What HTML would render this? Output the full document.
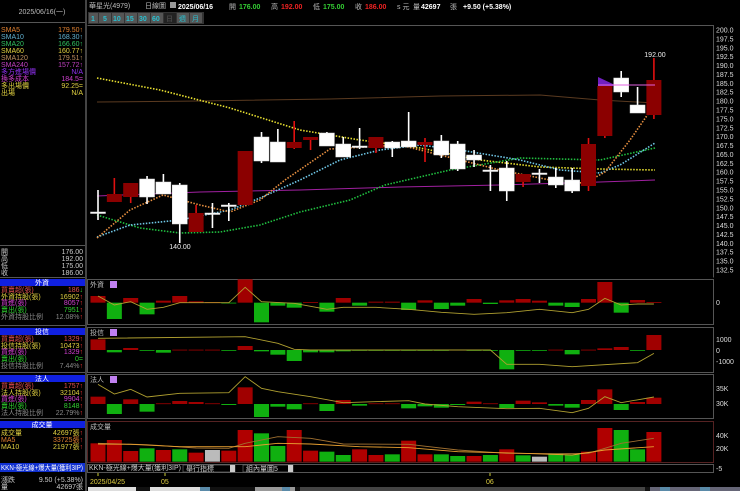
<!DOCTYPE html>
<html><head><meta charset="utf-8">
<style>
html,body{margin:0;padding:0;background:#000;width:740px;height:491px;overflow:hidden}
svg{display:block}
text{font-family:"Liberation Sans","Noto Sans CJK TC",sans-serif;font-size:7px}
</style></head><body>
<svg id="s" width="740" height="491" viewBox="0 0 740 491" xmlns="http://www.w3.org/2000/svg">
<defs><clipPath id="lc"><rect x="0" y="0" width="85" height="491"/></clipPath></defs>
<rect width="740" height="491" fill="#000"/>
<rect x="85" y="0" width="2" height="491" fill="#444"/>
<rect x="0" y="22" width="85" height="1" fill="#555"/>
<text x="42" y="14" fill="#bbb" text-anchor="middle" font-size="6.5">2025/06/16(一)</text>
<g font-size="6.5">
<text x="1" y="32" fill="#e08030">SMA5</text><text x="83" y="32" fill="#e08030" text-anchor="end">179.50↑</text>
<text x="1" y="39" fill="#60b0d0">SMA10</text><text x="83" y="39" fill="#60b0d0" text-anchor="end">168.30↑</text>
<text x="1" y="46" fill="#30c060">SMA20</text><text x="83" y="46" fill="#30c060" text-anchor="end">166.60↑</text>
<text x="1" y="53" fill="#e0d040">SMA60</text><text x="83" y="53" fill="#e0d040" text-anchor="end">160.77↑</text>
<text x="1" y="60" fill="#c09060">SMA120</text><text x="83" y="60" fill="#c09060" text-anchor="end">179.51↑</text>
<text x="1" y="67" fill="#c040c0">SMA240</text><text x="83" y="67" fill="#c040c0" text-anchor="end">157.72↑</text>
<text x="1" y="74" fill="#9030f0">多方進場價</text><text x="83" y="74" fill="#9030f0" text-anchor="end">N/A</text>
<text x="1" y="81" fill="#d040d0">換多成本</text><text x="83" y="81" fill="#d040d0" text-anchor="end">184.5=</text>
<text x="1" y="88" fill="#e0d040">多出場價</text><text x="83" y="88" fill="#e0d040" text-anchor="end">92.25=</text>
<text x="1" y="95" fill="#e0d040">出場</text><text x="83" y="95" fill="#e0d040" text-anchor="end">N/A</text>
</g>
<rect x="0" y="245" width="85" height="1" fill="#555"/>
<g font-size="6.5" fill="#ccc">
<text x="1" y="254">開</text><text x="83" y="254" text-anchor="end">176.00</text>
<text x="1" y="261">高</text><text x="83" y="261" text-anchor="end">192.00</text>
<text x="1" y="268">低</text><text x="83" y="268" text-anchor="end">175.00</text>
<text x="1" y="275">收</text><text x="83" y="275" text-anchor="end">186.00</text>
</g>
<rect x="0" y="277" width="85" height="1" fill="#555"/>
<rect x="0" y="279" width="85" height="7" fill="#1020e0"/>
<text x="42" y="285" fill="#fff" text-anchor="middle" font-size="6">外資</text>
<g font-size="6.5">
<text x="1" y="292" fill="#e05050">買賣超(張)</text><text x="83" y="292" fill="#e05050" text-anchor="end">186<tspan fill="#3c3">↓</tspan></text>
<text x="1" y="299" fill="#e0d040">外資持股(張)</text><text x="83" y="299" fill="#e0d040" text-anchor="end">16902<tspan fill="#e33">↑</tspan></text>
<text x="1" y="305" fill="#d040d0">買進(張)</text><text x="83" y="305" fill="#d040d0" text-anchor="end">8057<tspan fill="#e33">↑</tspan></text>
<text x="1" y="312" fill="#30d030">賣出(張)</text><text x="83" y="312" fill="#30d030" text-anchor="end">7951<tspan fill="#e33">↑</tspan></text>
<text x="1" y="319" fill="#888">外資持股比例</text><text x="83" y="319" fill="#888" text-anchor="end">12.08%<tspan fill="#e33">↑</tspan></text>
</g>
<rect x="0" y="325" width="85" height="1" fill="#555"/>
<rect x="0" y="328" width="85" height="7" fill="#1020e0"/>
<text x="42" y="334" fill="#fff" text-anchor="middle" font-size="6">投信</text>
<g font-size="6.5">
<text x="1" y="341" fill="#e05050">買賣超(張)</text><text x="83" y="341" fill="#e05050" text-anchor="end">1329<tspan fill="#e33">↑</tspan></text>
<text x="1" y="348" fill="#e0d040">投信持股(張)</text><text x="83" y="348" fill="#e0d040" text-anchor="end">10473<tspan fill="#e33">↑</tspan></text>
<text x="1" y="354" fill="#d040d0">買進(張)</text><text x="83" y="354" fill="#d040d0" text-anchor="end">1329<tspan fill="#e33">↑</tspan></text>
<text x="1" y="361" fill="#30d030">賣出(張)</text><text x="83" y="361" fill="#30d030" text-anchor="end">0=</text>
<text x="1" y="368" fill="#888">投信持股比例</text><text x="83" y="368" fill="#888" text-anchor="end">7.44%<tspan fill="#e33">↑</tspan></text>
</g>
<rect x="0" y="372" width="85" height="1" fill="#555"/>
<rect x="0" y="375" width="85" height="7" fill="#1020e0"/>
<text x="42" y="381" fill="#fff" text-anchor="middle" font-size="6">法人</text>
<g font-size="6.5">
<text x="1" y="388" fill="#e05050">買賣超(張)</text><text x="83" y="388" fill="#e05050" text-anchor="end">1757<tspan fill="#e33">↑</tspan></text>
<text x="1" y="395" fill="#e0d040">法人持股(張)</text><text x="83" y="395" fill="#e0d040" text-anchor="end">32104<tspan fill="#e33">↑</tspan></text>
<text x="1" y="401" fill="#d040d0">買進(張)</text><text x="83" y="401" fill="#d040d0" text-anchor="end">9904<tspan fill="#e33">↑</tspan></text>
<text x="1" y="408" fill="#30d030">賣出(張)</text><text x="83" y="408" fill="#30d030" text-anchor="end">8148<tspan fill="#e33">↑</tspan></text>
<text x="1" y="415" fill="#888">法人持股比例</text><text x="83" y="415" fill="#888" text-anchor="end">22.79%<tspan fill="#e33">↑</tspan></text>
</g>
<rect x="0" y="418" width="85" height="1" fill="#555"/>
<rect x="0" y="421" width="85" height="7" fill="#1020e0"/>
<text x="42" y="427" fill="#fff" text-anchor="middle" font-size="6">成交量</text>
<g font-size="6.5">
<text x="1" y="435" fill="#e0d040">成交量</text><text x="83" y="435" fill="#e0d040" text-anchor="end">42697張<tspan fill="#e33">↑</tspan></text>
<text x="1" y="442" fill="#e08030">MA5</text><text x="83" y="442" fill="#e08030" text-anchor="end">33725張<tspan fill="#e33">↑</tspan></text>
<text x="1" y="449" fill="#e0d040">MA10</text><text x="83" y="449" fill="#e0d040" text-anchor="end">21977張<tspan fill="#e33">↑</tspan></text>
</g>
<rect x="0" y="463" width="85" height="9" fill="#1030d0"/>
<g clip-path="url(#lc)"><text x="1" y="470" fill="#fff" font-size="5.6" textLength="82" lengthAdjust="spacingAndGlyphs">KKN-極光線+爆大量(獲利3IP)</text></g>
<g font-size="6.5" fill="#ccc">
<text x="1" y="482">漲跌</text><text x="83" y="482" text-anchor="end">9.50 (+5.38%)</text>
<text x="1" y="489">量</text><text x="83" y="489" text-anchor="end">42697張</text>
</g>

<g font-size="7">
<text x="89" y="8" fill="#bbb" font-size="6.5">華星光(4979)</text>
<text x="145" y="8" fill="#bbb" font-size="6.5">日線圖</text>
<rect x="170" y="2" width="6" height="6" fill="#999"/>
<text x="178" y="9" fill="#fff" font-weight="bold" font-size="8.5">2025/06/16</text>
<text x="229" y="9" fill="#bbb" font-size="6.5">開</text><text x="239" y="9" fill="#3c3" font-weight="bold" font-size="8">176.00</text>
<text x="271" y="9" fill="#bbb" font-size="6.5">高</text><text x="281" y="9" fill="#e22" font-weight="bold" font-size="8">192.00</text>
<text x="313" y="9" fill="#bbb" font-size="6.5">低</text><text x="323" y="9" fill="#3c3" font-weight="bold" font-size="8">175.00</text>
<text x="355" y="9" fill="#bbb" font-size="6.5">收</text><text x="365" y="9" fill="#e22" font-weight="bold" font-size="8">186.00</text>
<text x="397" y="9" fill="#bbb" font-size="6.5">s 元</text>
<text x="413" y="9" fill="#bbb" font-size="6.5">量</text><text x="421" y="9" fill="#fff" font-weight="bold" font-size="8">42697</text>
<text x="450" y="9" fill="#bbb" font-size="6.5">張</text>
<text x="463" y="9" fill="#fff" font-weight="bold" font-size="8">+9.50 (+5.38%)</text>
</g>
<rect x="88" y="12" width="116" height="12" fill="#333"/>
<g font-size="7" fill="#2ac0d0" font-weight="bold">
<rect x="89" y="13" width="9" height="10" fill="#555"/><text x="91" y="21">1</text>
<rect x="99" y="13" width="12" height="10" fill="#555"/><text x="103" y="21">5</text>
<rect x="112" y="13" width="12" height="10" fill="#555"/><text x="113" y="21">10</text>
<rect x="125" y="13" width="12" height="10" fill="#555"/><text x="126" y="21">15</text>
<rect x="138" y="13" width="12" height="10" fill="#555"/><text x="139" y="21">30</text>
<rect x="151" y="13" width="12" height="10" fill="#555"/><text x="152" y="21">60</text>
<rect x="164" y="13" width="12" height="10" fill="#222"/><text x="166" y="21" fill="#444">日</text>
<rect x="177" y="13" width="12" height="10" fill="#555"/><text x="179" y="21" font-weight="normal">週</text>
<rect x="190" y="13" width="12" height="10" fill="#555"/><text x="192" y="21" font-weight="normal">月</text>
</g>
<g fill="none" stroke="#555" stroke-width="1">
<path d="M87.5 25.5H713.5V277.5"/>
<rect x="87.5" y="279.5" width="626" height="45"/>
<rect x="87.5" y="327.5" width="626" height="45"/>
<rect x="87.5" y="374.5" width="626" height="44"/>
<rect x="87.5" y="421.5" width="626" height="41" stroke="#522"/>
<rect x="87.5" y="464.5" width="626" height="8"/>
</g>
<g id="dyn"></g>
<g font-size="6" fill="#bbb">
<text x="90" y="287">外資</text><rect x="110" y="281" width="7" height="7" fill="#c080f0"/>
<text x="90" y="335">投信</text><rect x="110" y="329" width="7" height="7" fill="#c080f0"/>
<text x="90" y="382">法人</text><rect x="110" y="376" width="7" height="7" fill="#c080f0"/>
<text x="90" y="429">成交量</text>
</g>
<g font-size="7.5" fill="#ddd">
<text x="716" y="305">0</text>
<text x="716" y="342">1000</text>
<text x="716" y="353">0</text>
<text x="716" y="364">-1000</text>
<text x="716" y="391">35K</text>
<text x="716" y="406">30K</text>
<text x="716" y="438">40K</text>
<text x="716" y="451">20K</text>
<text x="716" y="471">-5</text>
</g>
<text x="89" y="470" fill="#ccc" font-size="6">KKN-極光線+爆大量(獲利3IP)</text>
<rect x="183" y="465" width="52" height="7" fill="#000" stroke="#777" stroke-width="0.6"/><text x="186" y="471" fill="#ccc" font-size="6">舉行指標</text>
<rect x="230" y="465" width="5" height="7" fill="#ccc"/>
<rect x="243" y="465" width="50" height="7" fill="#000" stroke="#777" stroke-width="0.6"/><text x="246" y="471" fill="#ccc" font-size="6">組內量圖5</text>
<rect x="288" y="465" width="5" height="7" fill="#ccc"/>
<g stroke="#cc3" stroke-width="1"><path d="M98 473v3M165 473v3M490 473v3"/></g>
<text x="90" y="484" fill="#e0d040" font-size="8">2025/04/25</text>
<text x="161" y="484" fill="#e0d040" font-size="8">05</text>
<text x="486" y="484" fill="#e0d040" font-size="8">06</text>
<rect x="88" y="487" width="652" height="4" fill="#111"/>
<rect x="88" y="487" width="48" height="4" fill="#ddd"/>
<rect x="150" y="487" width="50" height="4" fill="#ddd"/>
<rect x="200" y="487" width="10" height="4" fill="#5a8aa8"/>
<rect x="255" y="487" width="40" height="4" fill="#999"/>
<rect x="282" y="487" width="8" height="4" fill="#5a8aa8"/>
<rect x="300" y="487" width="345" height="4" fill="#444"/>
<rect x="650" y="487" width="90" height="4" fill="#667"/>
<rect x="660" y="487" width="10" height="4" fill="#5a8aa8"/>
<rect x="700" y="487" width="10" height="4" fill="#5a8aa8"/>
</svg>
<script>
var NS="http://www.w3.org/2000/svg",g=document.getElementById("dyn");
function el(t,a){var e=document.createElementNS(NS,t);for(var k in a)e.setAttribute(k,a[k]);g.appendChild(e);return e;}
function cx(i){return 98+16.35*i;}
for(var k=0;k<=27;k++){var p=200-2.5*k,y=30+k*8.889;var t=el("text",{x:716,y:y+2.5,fill:"#ddd","font-size":"7.5"});t.textContent=p.toFixed(1);}
function line(pts,col,dash,w){el("polyline",{points:pts.map(function(p){return p.join(",")}).join(" "),fill:"none",stroke:col,"stroke-width":w||1.6,"stroke-dasharray":dash||"none"});}
line([[97,102],[200,101],[330,99],[440,96],[540,95],[600,100],[655,103]],"#5a3a20",null,1);
line([[97,196],[200,192],[300,190],[400,187],[500,185],[600,182],[655,180]],"#a020a0",null,1);
line([[97,78],[160,90],[230,108],[300,130],[360,140],[420,148],[480,160],[540,167],[600,169],[655,170]],"#e8e030","1.5 1.5");
line([[97,215],[140,228],[180,233],[220,232],[260,225],[300,212],[350,200],[385,185],[450,170],[520,158],[600,160],[655,148]],"#20c040","1.5 1.5");
line([[97,237],[130,225],[180,220],[230,210],[260,198],[300,180],[340,160],[380,150],[420,145],[460,150],[520,160],[560,170],[600,173],[620,165],[655,143]],"#70c8e8","1.5 1.5");
line([[97,238],[130,210],[163,195],[200,205],[230,212],[260,200],[285,180],[330,149],[365,147],[400,145],[460,160],[500,170],[560,182],[585,183],[605,172],[630,140],[655,104]],"#e89040","1.5 1.5");
var C=[["w",212,213,190,220],["r",194,202,178,202],["r",183,197,183,203],["w",179,197,176,204],["w",182,194,174,194],["w",185,224,183,243],["r",213,232,205,232],["w",213,214,203,228],["w",205,206,203,221],["r",151,205,151,205],["w",137,161,132,163],["w",142,162,129,162],["r",142,148,121,149],["r",137,140,137,150],["w",133,146,132,146],["w",144,157,137,157],["w",146,147,128,149],["r",137,148,137,153],["w",142,148,141,157],["w",141,147,112,147],["r",142,145,138,162],["w",141,155,135,158],["w",144,169,141,171],["w",155,160,150,167],["w",170,171,165,191],["w",168,191,161,201],["r",174,182,174,187],["w",173,174,169,183],["w",177,185,168,188],["w",180,191,168,193],["r",144,186,138,191],["r",86,136,86,138],["w",78,92,71,97],["w",105,113,87,113],["r",80,115,58,119]];
el("polygon",{points:"598,77 615,85 598,93",fill:"#7020c0"});
C.forEach(function(c,i){var x=cx(i),col=c[0]=="w"?"#fff":"#8b0000",wc=c[0]=="w"?"#fff":"#e01010";
el("rect",{x:x-0.8,y:c[3],width:1.6,height:c[4]-c[3],fill:wc});
el("rect",{x:x-7.5,y:c[1],width:15,height:Math.max(1.5,c[2]-c[1]),fill:col,stroke:c[0]=="w"?"#ddd":"none","stroke-width":0.5});});
el("rect",{x:598,y:84.5,width:57,height:1,fill:"#e060e0"});
var t1=el("text",{x:655,y:57,fill:"#eee","font-size":"7.5","text-anchor":"middle"});t1.textContent="192.00";
var t2=el("text",{x:180,y:249,fill:"#eee","font-size":"7.5","text-anchor":"middle"});t2.textContent="140.00";
function Y(z){return 270+z/3;}
function bars(data,zero){data.forEach(function(v,i){if(v==null)return;var y1=Y(Math.min(v,zero)),y2=Y(Math.max(v,zero));var col=v<zero?"#a00000":"#10b010";if(y2-y1<0.8){y2=y1+0.8;}el("rect",{x:cx(i)-7.5,y:y1,width:15,height:y2-y1,fill:col});});}
bars([78,147,84,133,92,78,94,96,100,28,157,107,113,96,125,84,107,95,95,120,91,117,107,87,102,91,87,92,107,111,87,36,128,90,96],98);
bars([208,247,234,241,248,239,239,239,241,228,244,254,273,247,247,244,241,241,241,241,241,241,239,241,241,298,241,241,239,253,239,235,231,241,195],240);
bars([380,432,388,425,400,393,396,400,405,352,441,410,418,400,423,390,407,400,400,415,409,413,405,395,400,414,392,397,407,413,390,358,420,396,383],402);
var V=[520,510,543,535,540,538,548,540,542,480,490,528,480,542,545,555,538,555,553,512,553,553,558,558,555,538,556,560,550,553,545,474,480,538,486];
var VC="rrrgrgrxrrggrrggrrgrrggrgrgxggrrggr";
V.forEach(function(v,i){var c=VC[i],col=c=="r"?"#b00000":c=="g"?"#10b010":"#bbb";el("rect",{x:cx(i)-7.5,y:Y(v),width:15,height:Y(575)-Y(v),fill:col});});
function zl(pts,col){line(pts.map(function(p){return [cx(p[0]),Y(p[1])]}),col,null,0.9);}
zl([[0,78],[1,105],[2,95],[3,118],[4,112],[5,98],[8,98],[9,52],[10,95],[12,100],[14,118],[15,112],[17,112],[19,118],[21,127],[23,133],[25,128],[27,118],[29,128],[30,118],[31,85],[32,105],[33,102],[34,102]],"#b0a030");
zl([[0,205],[9,200],[11,220],[12,238],[13,240],[24,240],[25,283],[27,283],[29,290],[33,278],[34,250]],"#b0a030");
zl([[0,343],[1,372],[2,358],[3,381],[5,370],[8,368],[9,320],[10,355],[11,365],[13,380],[15,398],[19,392],[20,402],[22,410],[25,416],[27,415],[29,428],[30,415],[31,380],[32,398],[34,381]],"#b0a030");
zl([[0,520],[3,524],[6,534],[8,535],[9,520],[11,500],[13,505],[15,522],[19,523],[22,540],[25,550],[28,551],[30,550],[32,520],[34,505]],"#a07030");
zl([[0,522],[2,523],[5,530],[9,530],[11,520],[13,522],[16,530],[19,533],[22,545],[26,550],[29,555],[31,540],[34,530]],"#e8a030");
</script>
</body></html>
